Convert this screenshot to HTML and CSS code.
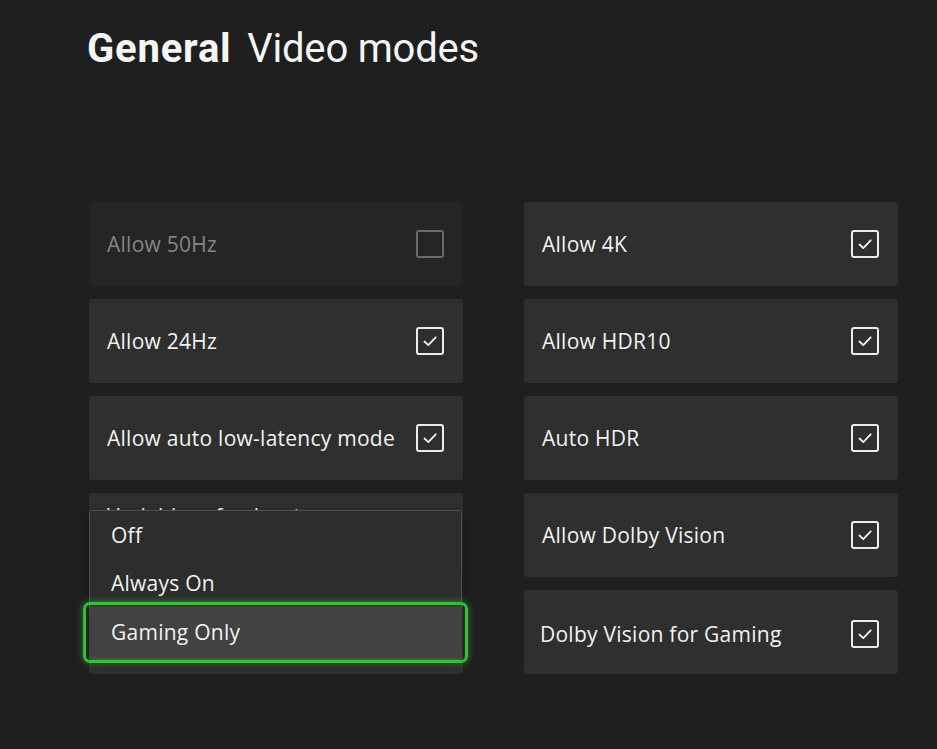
FILE: index.html
```html
<!DOCTYPE html>
<html lang="en">
<head>
<meta charset="utf-8">
<title>Video modes</title>
<link rel="stylesheet" href="styles.css">
</head>
<body>
<main class="page">
  <h1 class="title"><span class="title-bold">General</span> <span class="title-light">Video modes</span></h1>
  <div class="grid">
    <div class="tile disabled"><span class="label">Allow 50Hz</span><span class="box"></span></div>
    <div class="tile"><span class="label">Allow 4K</span><span class="box checked"><svg viewBox="0 0 24 24"><path d="M6.5 12.5l3.8 3.6 7.4-7.8"/></svg></span></div>
    <div class="tile"><span class="label">Allow 24Hz</span><span class="box checked"><svg viewBox="0 0 24 24"><path d="M6.5 12.5l3.8 3.6 7.4-7.8"/></svg></span></div>
    <div class="tile"><span class="label">Allow HDR10</span><span class="box checked"><svg viewBox="0 0 24 24"><path d="M6.5 12.5l3.8 3.6 7.4-7.8"/></svg></span></div>
    <div class="tile"><span class="label">Allow auto low-latency mode</span><span class="box checked"><svg viewBox="0 0 24 24"><path d="M6.5 12.5l3.8 3.6 7.4-7.8"/></svg></span></div>
    <div class="tile"><span class="label">Auto HDR</span><span class="box checked"><svg viewBox="0 0 24 24"><path d="M6.5 12.5l3.8 3.6 7.4-7.8"/></svg></span></div>
    <div class="tile tile-top anchor">
      <span class="label">Variable refresh rate</span>
      <div class="dropdown">
        <div class="option">Off</div>
        <div class="option">Always On</div>
        <div class="option selected">Gaming Only</div>
      </div>
    </div>
    <div class="tile"><span class="label">Allow Dolby Vision</span><span class="box checked"><svg viewBox="0 0 24 24"><path d="M6.5 12.5l3.8 3.6 7.4-7.8"/></svg></span></div>
    <div class="tile"></div>
    <div class="tile low"><span class="label shift">Dolby Vision for Gaming</span><span class="box checked"><svg viewBox="0 0 24 24"><path d="M6.5 12.5l3.8 3.6 7.4-7.8"/></svg></span></div>
  </div>
</main>
</body>
</html>
```
FILE: styles.css
```css
html, body {
  margin: 0;
  padding: 0;
  background: #1f1f1f;
  color: #f2f2f2;
  font-family: "Open Sans", "Noto Sans", sans-serif;
}
.page {
  width: 937px;
  height: 749px;
  padding: 21px 0 0 87px;
  box-sizing: border-box;
  overflow: hidden;
}
.title {
  margin: 0;
  font-family: "Roboto", "Open Sans", sans-serif;
  font-size: 40px;
  line-height: 56px;
  font-weight: 400;
  letter-spacing: -0.2px;
  color: #f5f5f5;
}
.title-bold { font-weight: 700; margin-right: 6px; letter-spacing: 0.8px; }
.grid {
  margin-top: 125px;
  margin-left: 2px;
  display: grid;
  grid-template-columns: 374px 374px;
  grid-auto-rows: 84px;
  column-gap: 61px;
  row-gap: 13px;
}
.tile {
  background: #2f2f2f;
  border-radius: 3px;
  display: flex;
  align-items: center;
  justify-content: space-between;
  padding: 0 19px 0 18px;
  font-size: 21px;
}
.tile .label { letter-spacing: 0.25px; }
.tile .label.shift { margin-left: -2px; }
.tile.low { padding-top: 4px; }
.tile.disabled {
  background: #252525;
  color: #858585;
}
.box {
  width: 24px;
  height: 24px;
  border: 2px solid #ececec;
  border-radius: 3px;
  display: flex;
  align-items: center;
  justify-content: center;
  flex: none;
}
.disabled .box { border-color: #6a6a6a; }
.box svg {
  width: 24px;
  height: 24px;
  fill: none;
  stroke: #f2f2f2;
  stroke-width: 1.8;
  stroke-linecap: round;
  stroke-linejoin: round;
}
.tile-top {
  align-items: flex-start;
  padding-top: 9px;
}
.anchor { position: relative; }
.dropdown {
  position: absolute;
  left: 0;
  top: 17px;
  width: 373px;
  box-sizing: border-box;
  background: #2d2d2d;
  border: 1px solid #4f4f4f;
  border-radius: 3px;
  box-shadow: 0 4px 10px rgba(0,0,0,0.35);
  padding: 0;
}
.option {
  height: 48px;
  line-height: 48px;
  padding-left: 21px;
  font-size: 21px;
  letter-spacing: 0.25px;
  color: #f2f2f2;
}
.option.selected {
  background: #424242;
  margin: 0 -1px 0 -1px;
  height: 52px;
  line-height: 50px;
  padding-left: 22px;
  position: relative;
  border-radius: 3px;
}
.option.selected::after {
  content: "";
  position: absolute;
  left: -6px;
  right: -6px;
  top: -5px;
  bottom: -4px;
  border: 3px solid #3fb83f;
  border-radius: 7px;
  box-shadow: 0 0 6px 1px rgba(60,200,60,0.45), inset 0 0 5px rgba(60,200,60,0.35);
}
```
